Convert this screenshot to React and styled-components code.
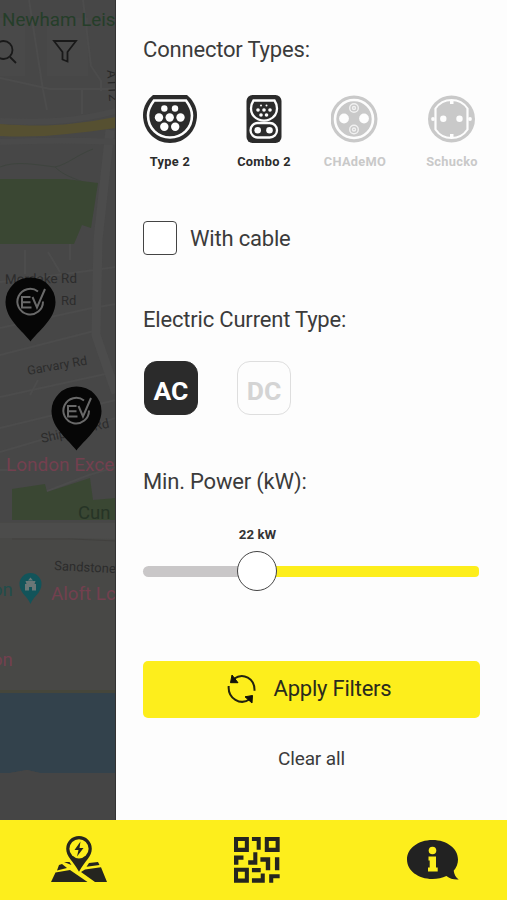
import React, { useState } from "react"
import styled, { createGlobalStyle, ThemeProvider } from "styled-components"

const theme = {
  colors: {
    yellow: "#fdee1c",
    black: "#2b2b2b",
    text: "#3b3b3b",
    grey: "#c9c9c9",
    panel: "#fdfdfd",
  },
}

const connectors = [
  { id: "type2", label: "Type 2", active: true },
  { id: "combo2", label: "Combo 2", active: true },
  { id: "chademo", label: "CHAdeMO", active: false },
  { id: "schucko", label: "Schucko", active: false },
]

const ConnectorIcon = ({ id }) => {
  if (id === "type2") {
    return (
      <svg width="54" height="48" viewBox="0 0 54 48">
        <path
          d="M10 0h34c5 4 10 11 10 20 0 16-12 28-27 28S0 36 0 20C0 11 5 4 10 0z"
          fill="currentColor"
        />
        <path
          d="M11 5.500h32c3 4 6 9 6 15 0 13-10 22-22 22S5 33.500 5 20.500c0-6 3-11 6-15z"
          fill="none"
          stroke="#fdfdfd"
          strokeWidth="2.600"
        />
        <g fill="#fdfdfd">
          <circle cx="21.300" cy="13.500" r="3.200" />
          <circle cx="32" cy="13.500" r="3.200" />
          <circle cx="16" cy="22.500" r="4.200" />
          <circle cx="26.700" cy="22.500" r="4.200" />
          <circle cx="37.500" cy="22.500" r="4.200" />
          <circle cx="21.300" cy="31.700" r="4.200" />
          <circle cx="32.200" cy="31.700" r="4.200" />
        </g>
      </svg>
    )
  }
  if (id === "combo2") {
    return (
      <svg width="36" height="48" viewBox="0 0 36 48">
        <rect width="35" height="48" x=".5" rx="6" fill="currentColor" />
        <path
          d="M7.500 5.500h21c2 3 2.500 5.500 2.500 8 0 5-3 9-7.500 11-3 1.300-8 1.300-11 0C8 22.500 5 18.500 5 13.500c0-2.500.5-5 2.500-8z"
          fill="none"
          stroke="#fdfdfd"
          strokeWidth="2.300"
        />
        <rect
          x="4.500"
          y="28"
          width="26.500"
          height="14.500"
          rx="7.200"
          fill="none"
          stroke="#fdfdfd"
          strokeWidth="2.300"
        />
        <g fill="#fdfdfd">
          <circle cx="15" cy="10.500" r="1" />
          <circle cx="20.500" cy="10.500" r="1" />
          <circle cx="12" cy="15" r="1.800" />
          <circle cx="18" cy="15" r="1.800" />
          <circle cx="24" cy="15" r="1.800" />
          <circle cx="15" cy="20" r="1.800" />
          <circle cx="20.500" cy="20" r="1.800" />
          <circle cx="11.700" cy="35.200" r="3.300" />
          <circle cx="23.500" cy="35.200" r="3.300" />
        </g>
      </svg>
    )
  }
  if (id === "chademo") {
    return (
      <svg width="48" height="48" viewBox="0 0 48 48">
        <circle cx="23" cy="24" r="23.500" fill="currentColor" />
        <circle
          cx="23"
          cy="24"
          r="19"
          fill="none"
          stroke="#fdfdfd"
          strokeWidth="2.600"
        />
        <circle cx="13" cy="23.500" r="4.900" fill="#fdfdfd" />
        <circle cx="33" cy="23.500" r="4.900" fill="#fdfdfd" />
        <g fill="none" stroke="#f1f1f1" strokeWidth="1.400">
          <circle cx="23" cy="13" r="4.300" />
          <circle cx="23" cy="13" r="1.500" />
          <circle cx="23" cy="34.500" r="4.300" />
          <circle cx="23" cy="34.500" r="1.500" />
        </g>
      </svg>
    )
  }
  return (
    <svg width="48" height="48" viewBox="0 0 48 48">
      <circle cx="23.500" cy="24" r="23.500" fill="currentColor" />
      <path
        d="M7.500 13.500a19.300 19.300 0 0 1 32 0v21a19.300 19.300 0 0 1-32 0z"
        fill="none"
        stroke="#fdfdfd"
        strokeWidth="2.200"
      />
      <g fill="#fdfdfd">
        <circle cx="15.300" cy="23.800" r="3.200" />
        <circle cx="31.500" cy="23.800" r="3.200" />
        <path d="M22 5h3.500v4H22zM22 39h3.500v4H22z" />
        <circle cx="5" cy="24" r="1.900" />
        <circle cx="42" cy="24" r="1.900" />
      </g>
    </svg>
  )
}

const MapPin = ({ x, y }) => (
  <g transform={`translate(${x} ${y})`}>
    <path
      d="M25 64C18 54 0 42 0 24.500a25 24.500 0 0 1 50 0C50 42 32 54 25 64z"
      fill="#060606"
    />
    <g fill="none" stroke="#696969" strokeWidth="2">
      <path d="M32.500 14a12.800 12.800 0 1 0 5 10" />
      <path d="M25 19.500h-8.500v10.500H26M17 24.700h8" />
      <path d="M27 19.500l4.500 10.500L39.500 11.500" />
    </g>
  </g>
)

const StreetMap = () => (
  <svg width="116" height="820" viewBox="0 0 116 820">
    <rect width="116" height="820" fill="#474747" />
    <rect y="522" width="116" height="298" fill="#484846" />
    <path d="M0 18H25V76H0zM47 18H88V76H47z" fill="#494949" />
    <g fill="none" stroke="#4c4c4c" strokeWidth="2">
      <path d="M29 0l14 90 4 20M83 0l8 66 10 15v10M0 78l50 11h66M82 90v24" />
      <path d="M0 282l65-8 51-7M0 328l92-20 24-4M0 355l98-25M0 397l110-24M0 428l116-28M0 452l116-34" />
      <path d="M25 250v24M48 252l12 20M70 240v20M0 470h12M24 500l65-25 27-8M30 395l8-15" />
    </g>
    <path
      d="M0 167c15-6 32-3 55 0 8 8 18 11 28 15M55 167c13-3 22-12 38-18"
      fill="none"
      stroke="#3e443e"
    />
    <path
      d="M110 130l-12 110-2 95 20 58"
      fill="none"
      stroke="#4c4c4c"
      strokeWidth="9"
    />
    <path
      d="M0 121c48 2 80 0 116-10M0 142c50-2 80-2 116 0"
      fill="none"
      stroke="#4a4a4a"
      strokeWidth="6"
    />
    <path d="M0 124c43 3 67 2 116-7v11c-45 6-72 10-116 8z" fill="#565031" />
    <path d="M0 179h66l32 4-7 45-9-3-8 19H0z" fill="#3a4733" />
    <path d="M12 489l33-5 2 8 43-14 3 22 23-2v22H12z" fill="#3a4733" />
    <path d="M0 523h116v16l-50-1H0z" fill="#4c4c4b" />
    <path d="M12 539h60l44 2" fill="none" stroke="#42413f" />
    <path d="M0 690h116v4H0z" fill="#45463b" />
    <path d="M0 693h116v80H40l-13-3-17 3H0z" fill="#33424c" />
    <path d="M0 773h10l17-3 13 3h76v47H0z" fill="#454545" />

    <g fontFamily="Roboto, sans-serif">
      <MapLabel x="2" y="26" $size={18.800} $color="#253e29">
        Newham Leis
      </MapLabel>
      <MapLabel
        $size={13.500}
        $color="#292929"
        transform="translate(107 70) rotate(86)"
      >
        A112
      </MapLabel>
      <MapLabel $size={13.500} transform="translate(5 284) rotate(-1)">
        Mordake Rd
      </MapLabel>
      <MapLabel x="61" y="305" $size={13}>
        Rd
      </MapLabel>
      <MapLabel $size={12.500} transform="translate(28 375) rotate(-10)">
        Garvary Rd
      </MapLabel>
      <MapLabel $size={13} transform="translate(42 443) rotate(-13)">
        Shipman Rd
      </MapLabel>
      <MapLabel x="6" y="471" $size={19} $color="#73404f">
        London Exce
      </MapLabel>
      <MapLabel x="78" y="519" $size={18.500} $color="#263426">
        Cun
      </MapLabel>
      <MapLabel $size={13} transform="translate(54 570) rotate(3)">
        Sandstone
      </MapLabel>
      <MapLabel x="51" y="600" $size={18.800} $color="#73404f">
        Aloft Lc
      </MapLabel>
      <MapLabel x="-8" y="596" $size={18.500} $color="#214d4b">
        on
      </MapLabel>
      <MapLabel x="-8" y="666" $size={18.500} $color="#73404f">
        on
      </MapLabel>
    </g>

    <path
      d="M30.500 604c-3-8-11-11-11-20a11 11 0 0 1 22 0c0 9-8 12-11 20z"
      fill="#12545a"
    />
    <path
      d="M25 590.500v-6.500h1.500l-1-3h10l-1 3H36v6.500h-4v-3.500h-3v3.500zM28 580.500l2.500-3 2.500 3z"
      fill="#6a7777"
    />
    <MapPin x={5.500} y={277.500} />
    <MapPin x={51.500} y={386.500} />
    <g fill="none" stroke="#191919" strokeWidth="1.800">
      <circle cx="3.500" cy="50" r="9" />
      <path d="M10 57l6 6M54 41h22l-8.500 11v9.500l-5-2V52z" />
    </g>
    <path d="M115.500 0v820" stroke="#333" />
  </svg>
)

const RefreshIcon = () => (
  <svg width="30" height="30" viewBox="0 0 30 30" fill="none">
    <g stroke="#22220f" strokeWidth="2">
      <path d="M7 4.700c9-6.500 21-.5 20.500 12" />
      <path d="M23 25C13.500 32 .7 24.500 1.700 12" />
    </g>
    <path
      d="M5 1l-1.500 7.700h7.500zM25.500 21.500l-7.500 1.300 7 6.200z"
      fill="#11110a"
      stroke="#11110a"
    />
  </svg>
)

const MapNavIcon = () => (
  <svg width="56" height="47" viewBox="0 0 56 47">
    <path
      d="M28 0a12.800 12.800 0 0 1 12.800 12.800c0 8-7 12-12.800 23-5.800-11-12.800-15-12.800-23A12.800 12.800 0 0 1 28 0z"
      fill="#25251f"
    />
    <circle cx="28" cy="12.800" r="9.600" fill="#fdee1c" />
    <path
      d="M29.500 5.500l-6 8.500h4l-1.500 6.500 6.500-8.500h-4z"
      fill="#25251f"
    />
    <g fill="#25251f">
      <path d="M8 29l3-1 5 4-10 2.500zM13 26h5.500l2 3z" />
      <path d="M4.500 36.500l14.500-2.500L36.500 46H0z" />
      <path d="M38 27l9-1 1.500 3-13 1.800zM34 33.500l16-2.300L56 46H44L30 36z" />
    </g>
  </svg>
)

const QrIcon = () => (
  <svg width="46" height="46" viewBox="0 0 136 136" fill="#25251f">
    <path
      d="M0 0h44v44H0zM12 12v20h20V12zM91 0h44v44H91zM103 12v20h20V12zM0 91h44v44H0zM12 103v20h20v-20z"
      fillRule="evenodd"
    />
    <path d="M53 0h26v38H67V12H53zM0 55h28v12H13v15H0zM57 45h12v37H42V69h15zM78 60h29v38H94V73H78zM121 60h13v38h-13z" />
    <path d="M53 92h26v12H53zM79 108h12v27H53v-13h26zM104 110h31v12h-19v13h-12z" />
  </svg>
)

const InfoIcon = () => (
  <svg width="52" height="40" viewBox="0 0 52 40">
    <path
      d="M25.500 0C40 0 51 8.500 51 19.500c0 4-1.500 8-4.300 11.300.5 3.700 2 6.500 5 8.700-5 .3-9-.8-12.300-3.500-4 2-9 3-13.900 3C11 39 0 30.500 0 19.500S11 0 25.500 0z"
      fill="#222"
    />
    <circle cx="25.500" cy="10.500" r="3.800" fill="#fdee1c" />
    <path
      d="M21.500 16.500h7.500v11h1.700v4h-9.700v-4h1.700v-7h-1.200z"
      fill="#fdee1c"
    />
  </svg>
)

const App = () => {
  const [current, setCurrent] = useState("AC")
  const [withCable, setWithCable] = useState(false)

  return (
    <ThemeProvider theme={theme}>
      <GlobalStyle />
      <Screen>
        <Main>
          <MapArea>
            <StreetMap />
          </MapArea>
          <Panel>
            <Title>Connector Types:</Title>
            <ConnectorList>
              {connectors.map(item => (
                <Connector key={item.id} $active={item.active}>
                  <ConnectorIcon id={item.id} />
                  <span>{item.label}</span>
                </Connector>
              ))}
            </ConnectorList>
            <CableLabel>
              <Checkbox
                type="checkbox"
                checked={withCable}
                onChange={() => setWithCable(!withCable)}
              />
              With cable
            </CableLabel>
            <Title>Electric Current Type:</Title>
            <CurrentList>
              {["AC", "DC"].map(type => (
                <CurrentButton
                  key={type}
                  $active={current === type}
                  onClick={() => setCurrent(type)}
                >
                  {type}
                </CurrentButton>
              ))}
            </CurrentList>
            <Title>Min. Power (kW):</Title>
            <PowerValue>22 kW</PowerValue>
            <Slider>
              <Track $width="96px" $color="#c9c7c8" $side="left" />
              <Thumb />
              <Track $color="#fdee1c" $side="right" />
            </Slider>
            <ApplyButton>
              <RefreshIcon />
              <span>Apply Filters</span>
            </ApplyButton>
            <ClearButton>Clear all</ClearButton>
          </Panel>
        </Main>
        <BottomNav>
          <MapNavIcon />
          <QrIcon />
          <InfoIcon />
        </BottomNav>
      </Screen>
    </ThemeProvider>
  )
}

const GlobalStyle = createGlobalStyle`
  * {
    box-sizing: border-box;
  }

  body {
    margin: 0;
    font-family: Roboto, sans-serif;
  }

  button {
    font-family: inherit;
    padding: 0;
    border: none;
    cursor: pointer;
  }

  svg {
    display: block;
    flex-shrink: 0;
  }
`

const Screen = styled.div`
  display: flex;
  flex-direction: column;
  width: 507px;
  height: 900px;
  overflow: hidden;
`

const Main = styled.main`
  display: flex;
  height: 819.5px;
`

const MapArea = styled.div`
  width: 116px;
  overflow: hidden;
`

const MapLabel = styled.text`
  font-size: ${({ $size }) => $size}px;
  fill: ${({ $color }) => $color || "#2c2c2c"};
`

const Panel = styled.section`
  display: flex;
  flex-direction: column;
  flex: 1;
  padding: 37px 27px 0;
  background: ${({ theme }) => theme.colors.panel};
`

const Title = styled.h2`
  margin: 0;
  font-size: 22px;
  font-weight: 400;
  line-height: 26px;
  letter-spacing: -0.19px;
  color: ${({ theme }) => theme.colors.text};
`

const ConnectorList = styled.div`
  display: grid;
  grid-template-columns: 94px 91px 97px 54px;
  margin-top: 32px;
`

const Connector = styled.div`
  display: flex;
  flex-direction: column;
  align-items: center;
  width: 54px;
  color: ${({ theme, $active }) =>
    $active ? theme.colors.black : theme.colors.grey};

  span {
    margin-top: 11px;
    font-size: 12.8px;
    font-weight: 700;
    line-height: 16px;
    letter-spacing: 0.3px;
    white-space: nowrap;
  }
`

const CableLabel = styled.label`
  display: flex;
  align-items: center;
  gap: 13px;
  height: 34px;
  margin: 51px 0 52px;
  font-size: 22px;
  letter-spacing: -0.19px;
  color: ${({ theme }) => theme.colors.text};
`

const Checkbox = styled.input`
  appearance: none;
  width: 34px;
  height: 34px;
  margin: 0;
  border: 1.5px solid #444;
  border-radius: 4px;
  background: #fff;
`

const CurrentList = styled.div`
  display: flex;
  gap: 39px;
  margin: 28px 0 54px 1px;
`

const CurrentButton = styled.button`
  width: 54px;
  height: 54px;
  border: 1.5px solid ${({ $active }) => ($active ? "#2b2b2b" : "#dedede")};
  border-radius: 13px;
  background: ${({ $active }) => ($active ? "#2b2b2b" : "#fdfdfd")};
  color: ${({ $active }) => ($active ? "#fff" : "#d4d4d4")};
  font-size: 26.5px;
  font-weight: 700;
  line-height: 58px;
`

const PowerValue = styled.div`
  width: 229px;
  margin-top: 31px;
  font-size: 13.3px;
  font-weight: 700;
  line-height: 17px;
  text-align: center;
  color: #333;
`

const Slider = styled.div`
  display: flex;
  align-items: center;
  height: 40px;
  margin-top: 8px;
  padding-right: 1px;
`

const Track = styled.div`
  width: ${({ $width }) => $width || "auto"};
  flex: ${({ $width }) => ($width ? "none" : 1)};
  height: 11px;
  margin: ${({ $side }) => ($side === "left" ? "0 -2px 0 0" : "0 0 0 -2px")};
  border-radius: ${({ $side }) =>
    $side === "left" ? "6px 0 0 6px" : "0 4px 4px 0"};
  background: ${({ $color }) => $color};
`

const Thumb = styled.div`
  width: 40px;
  height: 40px;
  border: 1.3px solid #444;
  border-radius: 50%;
  background: #fff;
  z-index: 1;
`

const ApplyButton = styled.button`
  display: flex;
  align-items: center;
  justify-content: center;
  gap: 17px;
  height: 57px;
  margin-top: 70px;
  padding: 0 5px 2px 0;
  border-radius: 5px;
  background: ${({ theme }) => theme.colors.yellow};
  color: #2b2b1c;
  font-size: 22px;
  letter-spacing: -0.22px;
`

const ClearButton = styled.button`
  align-self: center;
  margin-top: 30px;
  background: none;
  color: ${({ theme }) => theme.colors.text};
  font-size: 19px;
  line-height: 22px;
  letter-spacing: -0.1px;
`

const BottomNav = styled.nav`
  display: flex;
  align-items: center;
  justify-content: space-between;
  height: 80.5px;
  padding: 0 48px 0 51px;
  background: ${({ theme }) => theme.colors.yellow};
`

export default App
